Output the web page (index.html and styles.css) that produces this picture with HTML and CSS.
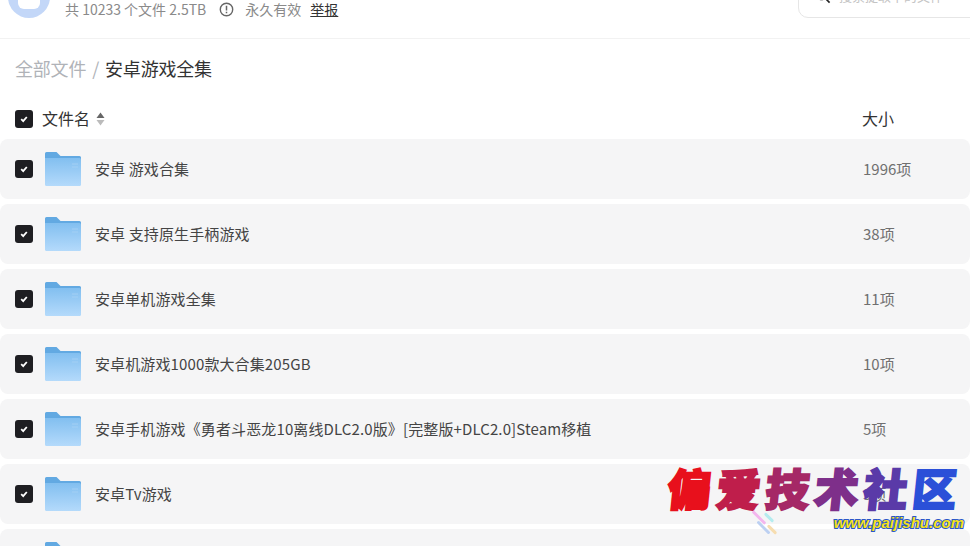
FILE: index.html
```html
<!DOCTYPE html>
<html lang="zh-CN">
<head>
  <meta charset="UTF-8" />
  <title>安卓游戏全集</title>
  <link rel="stylesheet" href="styles.css">
</head>
<body>
<div class="page">
  <header class="top">
    <div class="avatar"><div class="avatar-in"></div></div>
    <span class="meta">共 10233 个文件 2.5TB</span>
    <svg class="info" width="15" height="15" viewBox="0 0 15 15"><circle cx="7.5" cy="7.5" r="6.2" fill="none" stroke="#666" stroke-width="1.4"/><path d="M7.5 3.8v4.6M7.5 9.8v1.4" stroke="#666" stroke-width="1.5" fill="none"/></svg>
    <span class="meta">永久有效</span>
    <a class="report">举报</a>
    <div class="search">
      <svg width="16" height="16" viewBox="0 0 16 16"><circle cx="6.5" cy="6.5" r="5" fill="none" stroke="#222" stroke-width="1.6"/><path d="M10.2 10.2l4.4 4.4" stroke="#222" stroke-width="1.6"/></svg>
      <span class="search-text">搜索提取下的文件</span>
    </div>
  </header>

  <div class="crumbs">
    <span class="crumb-root">全部文件</span>
    <span class="crumb-sep">/</span>
    <span class="crumb-now">安卓游戏全集</span>
  </div>

  <div class="head-row">
    <span class="check"><svg width="10" height="10" viewBox="0 0 10 10"><path d="M2.2 5.2l2 2 3.6-4.2" fill="none" stroke="#fff" stroke-width="1.8"/></svg></span>
    <span class="head-name">文件名</span>
    <svg class="sort" width="9" height="14" viewBox="0 0 9 14"><path d="M4.5 0.5L8.5 6H0.5z" fill="#666"/><path d="M4.5 13.5L8.5 8H0.5z" fill="#bbb"/></svg>
    <span class="head-size">大小</span>
  </div>

  <div class="rows">
    <div class="row">
      <span class="check"><svg width="10" height="10" viewBox="0 0 10 10"><path d="M2.2 5.2l2 2 3.6-4.2" fill="none" stroke="#fff" stroke-width="1.8"/></svg></span>
      <svg class="folder" width="36" height="34" viewBox="0 0 36 34"><use href="#folder-icon"/></svg>
      <span class="name">安卓 游戏合集</span>
      <span class="size">1996项</span>
    </div>
    <div class="row">
      <span class="check"><svg width="10" height="10" viewBox="0 0 10 10"><path d="M2.2 5.2l2 2 3.6-4.2" fill="none" stroke="#fff" stroke-width="1.8"/></svg></span>
      <svg class="folder" width="36" height="34" viewBox="0 0 36 34"><use href="#folder-icon"/></svg>
      <span class="name">安卓 支持原生手柄游戏</span>
      <span class="size">38项</span>
    </div>
    <div class="row">
      <span class="check"><svg width="10" height="10" viewBox="0 0 10 10"><path d="M2.2 5.2l2 2 3.6-4.2" fill="none" stroke="#fff" stroke-width="1.8"/></svg></span>
      <svg class="folder" width="36" height="34" viewBox="0 0 36 34"><use href="#folder-icon"/></svg>
      <span class="name">安卓单机游戏全集</span>
      <span class="size">11项</span>
    </div>
    <div class="row">
      <span class="check"><svg width="10" height="10" viewBox="0 0 10 10"><path d="M2.2 5.2l2 2 3.6-4.2" fill="none" stroke="#fff" stroke-width="1.8"/></svg></span>
      <svg class="folder" width="36" height="34" viewBox="0 0 36 34"><use href="#folder-icon"/></svg>
      <span class="name">安卓机游戏1000款大合集205GB</span>
      <span class="size">10项</span>
    </div>
    <div class="row">
      <span class="check"><svg width="10" height="10" viewBox="0 0 10 10"><path d="M2.2 5.2l2 2 3.6-4.2" fill="none" stroke="#fff" stroke-width="1.8"/></svg></span>
      <svg class="folder" width="36" height="34" viewBox="0 0 36 34"><use href="#folder-icon"/></svg>
      <span class="name">安卓手机游戏《勇者斗恶龙10离线DLC2.0版》[完整版+DLC2.0]Steam移植</span>
      <span class="size">5项</span>
    </div>
    <div class="row">
      <span class="check"><svg width="10" height="10" viewBox="0 0 10 10"><path d="M2.2 5.2l2 2 3.6-4.2" fill="none" stroke="#fff" stroke-width="1.8"/></svg></span>
      <svg class="folder" width="36" height="34" viewBox="0 0 36 34"><use href="#folder-icon"/></svg>
      <span class="name">安卓Tv游戏</span>
      <span class="size">3项</span>
    </div>
    <div class="row">
      <span class="check check-hidden"></span>
      <svg class="folder" width="36" height="34" viewBox="0 0 36 34"><use href="#folder-icon"/></svg>
    </div>
  </div>

  <div class="mark">
    <div class="mark-title">
      <span class="c1">偏</span><span class="c2">爱</span><span class="c3">技</span><span class="c4">术</span><span class="c5">社</span><span class="c6">区</span>
    </div>
    <div class="mark-url">www.paijishu.com</div>
    <i class="dash d1"></i><i class="dash d2"></i><i class="dash d3"></i><i class="dash d4"></i>
  </div>
</div>

<svg class="defs" width="0" height="0">
  <defs>
    <linearGradient id="folder-body" x1="0" y1="0" x2="0" y2="1">
      <stop offset="0" stop-color="#82bff0"/>
      <stop offset="1" stop-color="#b4dafb"/>
    </linearGradient>
    <g id="folder-icon">
      <path d="M0 1.5a1.500 1.500 0 0 1 1.500-1.500h10l4 4h19a1.500 1.500 0 0 1 1.500 1.500v6H0z" fill="#62a9e2"/>
      <path d="M0 6h34.500a1.500 1.500 0 0 1 1.500 1.500v25a1.500 1.500 0 0 1-1.500 1.500H1.500a1.500 1.500 0 0 1-1.500-1.500z" fill="url(#folder-body)"/>
      <path d="M27 12h6M27 15h6" stroke="#a3cff4" stroke-width="1"/>
    </g>
  </defs>
</svg>
</body>
</html>
```

FILE: styles.css
```css
*{box-sizing:border-box}
body{
  margin:0;
  font-family:"Noto Sans CJK SC","Liberation Sans",sans-serif;
  background:#fff;
  color:#333;
}
.page{position:relative;width:970px;height:546px;overflow:hidden}

.top{
  display:flex;
  align-items:flex-end;
  height:39px;
  padding:0 0 0 8px;
  border-bottom:1px solid #f2f2f2;
  overflow:hidden;
}
.avatar{
  flex:none;
  width:42px;
  height:42px;
  margin:0 15px 20px 0;
  border-radius:50%;
  background:#c3d7f8;
  display:flex;
  align-items:flex-end;
  justify-content:center;
  padding-bottom:9px;
}
.avatar-in{width:22px;height:16px;background:#fff;border-radius:6px}
.meta{font-size:14px;line-height:20px;color:#8a8a8a;margin-bottom:19px}
.info{margin:0 11px 21px 13px;flex:none}
.report{
  font-size:14px;
  line-height:18px;
  color:#333;
  text-decoration:underline;
  margin:0 0 20px 9px;
}
.search{
  display:flex;
  align-items:flex-end;
  gap:8px;
  width:190px;
  height:40px;
  margin:0 -18px 20px auto;
  padding:0 0 13px 16px;
  border:1px solid #e6e6e6;
  border-radius:10px;
  flex:none;
}
.search-text{font-size:13px;line-height:16px;color:#c4c4c4;white-space:nowrap}

.crumbs{display:flex;align-items:center;height:26px;margin:16px 0 0 15px;font-size:18px;letter-spacing:-.2px}
.crumb-root{color:#b0b3b8}
.crumb-sep{color:#b0b3b8;margin:0 6px}
.crumb-now{color:#333}

.head-row{display:flex;align-items:center;height:24px;margin-top:26px;padding-left:15px}
.head-name{font-size:16px;margin:-2px 0 0 9px;color:#333}
.sort{margin-left:6px}
.head-size{font-size:16px;margin:-2px 0 0 auto;width:108px;color:#333}

.check{
  flex:none;
  display:flex;
  align-items:center;
  justify-content:center;
  width:18px;
  height:18px;
  border-radius:3px;
  background:#1e1e22;
}
.check-hidden{background:none}

.rows{display:flex;flex-direction:column;gap:5px;margin-top:8px}
.row{
  display:flex;
  align-items:center;
  height:60px;
  padding-left:15px;
  background:#f5f5f6;
  border-radius:8px;
}
.folder{flex:none;margin:0 14px 0 12px}
.name{font-size:15px;color:#444;letter-spacing:.12px;margin-top:-2px}
.size{font-size:15px;color:#707070;margin:-2px 0 0 auto;width:107px}

.mark{position:absolute;left:668px;top:460px;width:296px;height:84px}
.mark-title{display:flex;gap:5px;font-size:44px;line-height:54px;font-weight:900;transform:skewX(-6deg)}
.mark-title span{-webkit-text-stroke:2px currentColor}
.c1{color:#e8101c}
.c2{color:#bf1e4b}
.c3{color:#a52866}
.c4{color:#7e2f8a}
.c5{color:#5a3aa8}
.c6{color:#2b50d8}
.mark-url{
  position:absolute;
  right:0;
  top:55px;
  font-family:"Liberation Sans",sans-serif;
  font-size:15px;
  line-height:16px;
  font-weight:700;
  font-style:italic;
  color:#f6e21a;
  -webkit-text-stroke:2px #2a56c8;
  paint-order:stroke fill;
}
.dash{position:absolute;display:block;height:3px;border-radius:2px;transform:rotate(45deg)}
.d1{left:82px;top:56px;width:18px;background:#f3b6ee}
.d2{left:95px;top:56px;width:12px;background:#b5ecef}
.d3{left:87px;top:66px;width:17px;background:#bcd0f2}
.d4{left:98px;top:68px;width:12px;background:#f6ddb0}
.defs{position:absolute}
```
